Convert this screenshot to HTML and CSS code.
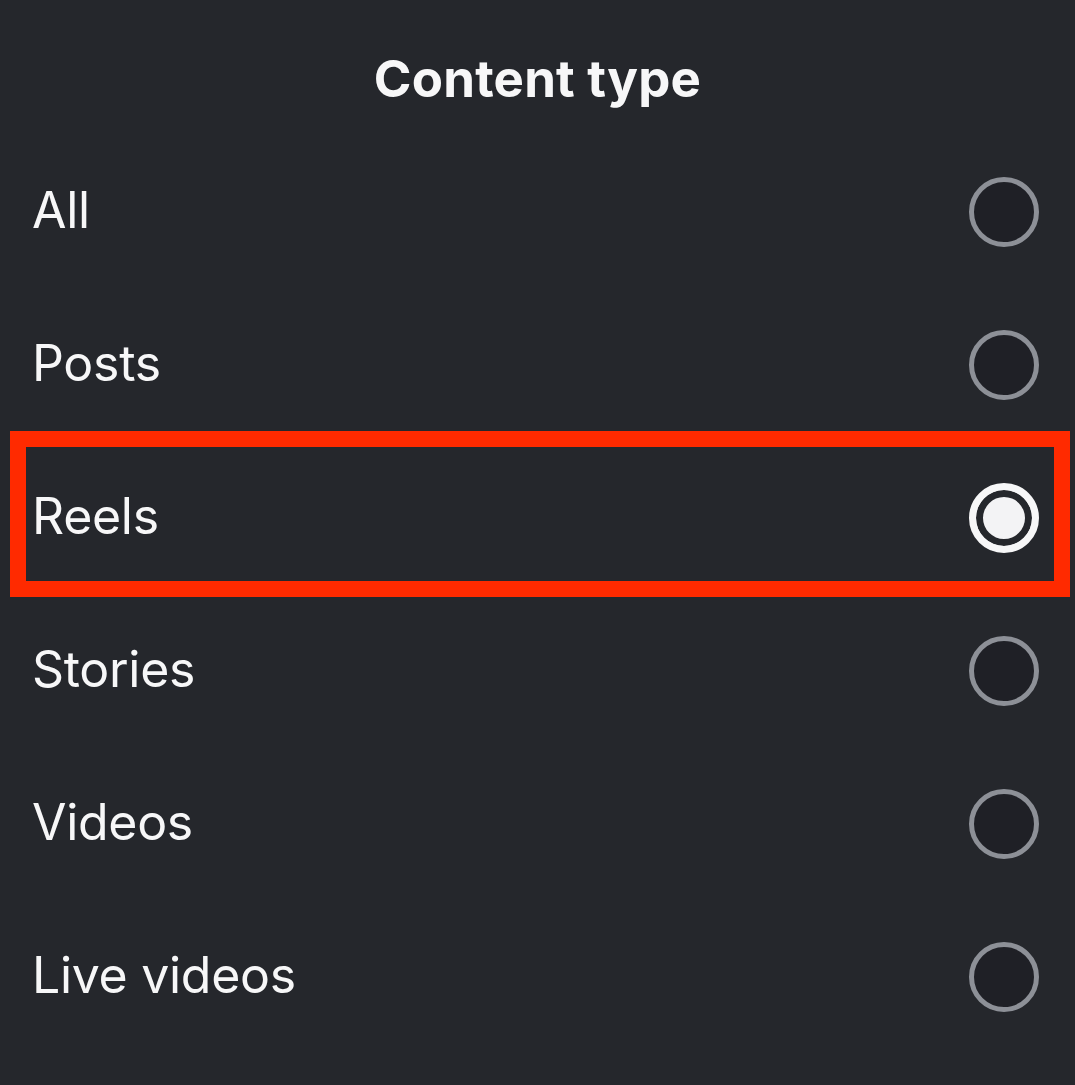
FILE: index.html
```html
<!DOCTYPE html>
<html lang="en">
<head>
<meta charset="utf-8">
<title>Content type</title>
<link rel="stylesheet" href="styles.css">
</head>
<body>
<div class="sheet">
  <h1 class="title">Content type</h1>
  <ul class="options">
    <li class="option"><span class="label">All</span><span class="radio"></span></li>
    <li class="option"><span class="label">Posts</span><span class="radio"></span></li>
    <li class="option highlighted"><span class="label">Reels</span><span class="radio checked"></span><span class="mark"></span></li>
    <li class="option"><span class="label">Stories</span><span class="radio"></span></li>
    <li class="option"><span class="label">Videos</span><span class="radio"></span></li>
    <li class="option"><span class="label">Live videos</span><span class="radio"></span></li>
  </ul>
</div>
</body>
</html>
```

FILE: styles.css
```css
html, body {
  margin: 0;
  padding: 0;
  background: #25272c;
}
body {
  width: 1075px;
  height: 1085px;
  overflow: hidden;
  font-family: Inter, "Liberation Sans", sans-serif;
  color: #f7f7f8;
}
.sheet {
  display: flex;
  flex-direction: column;
}
.title {
  margin: 0;
  height: 135px;
  display: flex;
  align-items: flex-start;
  justify-content: center;
  padding-top: 49px;
  box-sizing: border-box;
  font-size: 51px;
  font-weight: 700;
  line-height: 60px;
  letter-spacing: 0.2px;
}
.options {
  list-style: none;
  margin: 0;
  padding: 0;
}
.option {
  position: relative;
  height: 153px;
  display: flex;
  align-items: center;
  justify-content: space-between;
  padding: 0 36px 0 32px;
}
.label {
  font-size: 50px;
  font-weight: 400;
  letter-spacing: -0.3px;
  line-height: 60px;
  margin-top: -3px;
}
.radio {
  width: 70px;
  height: 70px;
  box-sizing: border-box;
  border-radius: 50%;
  border: 5px solid #8d9097;
  background: #1f2026;
}
.radio.checked {
  border: 7px solid #f7f7f8;
  background: #f3f3f5;
  box-shadow: inset 0 0 0 7px #25272c;
}
.mark {
  position: absolute;
  left: 10px;
  right: 5px;
  top: -10px;
  bottom: -3px;
  border: 16px solid #ff2a00;
  pointer-events: none;
}
```
